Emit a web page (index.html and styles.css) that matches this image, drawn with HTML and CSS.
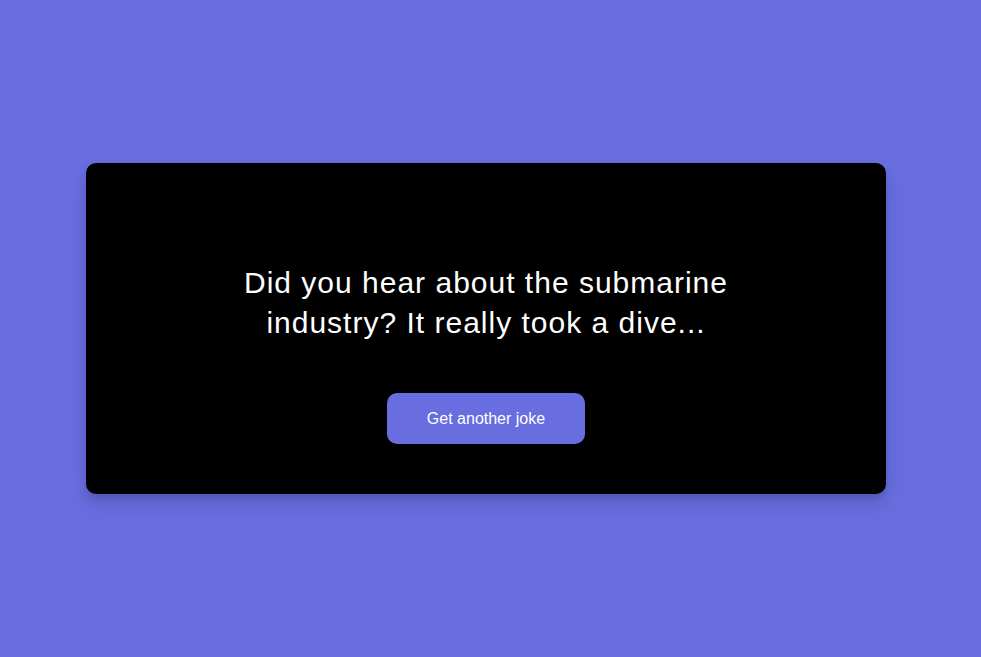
FILE: index.html
```html
<!DOCTYPE html>
<html lang="en">
<head>
<meta charset="UTF-8">
<title>Dad Jokes</title>
<link rel="stylesheet" href="styles.css">
</head>
<body>
  <div class="container">
    <div class="joke">Did you hear about the submarine industry? It really took a dive...</div>
    <button class="btn">Get another joke</button>
  </div>
</body>
</html>
```
FILE: styles.css
```css
* { box-sizing: border-box; }
html, body { margin: 0; }
body {
  background: #686de0;
  font-family: "Liberation Sans", Arial, sans-serif;
  display: flex;
  align-items: center;
  justify-content: center;
  height: 100vh;
  overflow: hidden;
  padding-right: 9px;
}
.container {
  background: #000;
  border-radius: 10px;
  box-shadow: 0 10px 20px rgba(0, 0, 0, 0.1), 0 6px 6px rgba(0, 0, 0, 0.1);
  padding: 50px 20px;
  text-align: center;
  width: 800px;
}
.joke {
  color: #fff;
  font-size: 30px;
  letter-spacing: 1px;
  line-height: 40px;
  margin: 50px auto;
  max-width: 600px;
}
.btn {
  background: #686de0;
  color: #fff;
  border: 0;
  border-radius: 10px;
  padding: 16px 40px;
  font-family: "Liberation Sans", Arial, sans-serif;
  font-size: 16px;
  line-height: 19px;
  cursor: pointer;
}
```
